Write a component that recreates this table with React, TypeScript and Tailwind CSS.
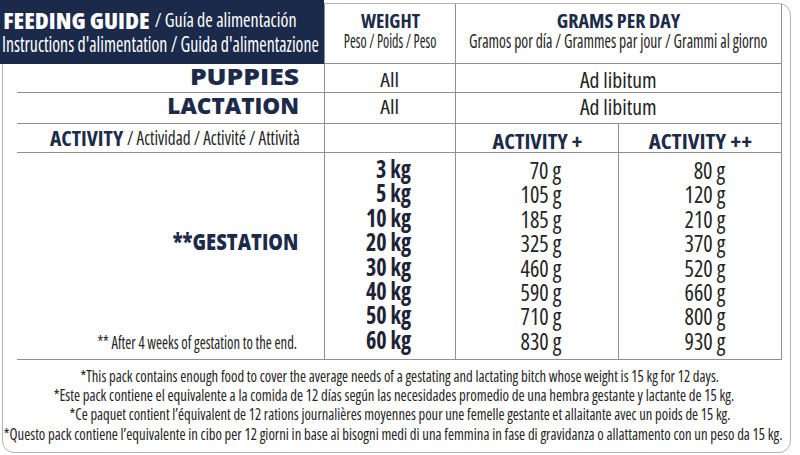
import React from "react";

function F({ box, txt, children }: { box: string; txt: string; children: React.ReactNode }) {
  return (
    <span className={"flex shrink-0 justify-center " + box}>
      <span className={"inline-block whitespace-nowrap " + txt}>{children}</span>
    </span>
  );
}

const kg = ["3 kg", "5 kg", "10 kg", "20 kg", "30 kg", "40 kg", "50 kg", "60 kg"];
const plus = ["70 g", "105 g", "185 g", "325 g", "460 g", "590 g", "710 g", "830 g"];
const plus2 = ["80 g", "120 g", "210 g", "370 g", "520 g", "660 g", "800 g", "930 g"];

export default function App() {
  return (
    <div className="h-[455px] w-[800px] overflow-hidden bg-white font-['Open_Sans'] font-stretch-condensed text-[#242424]">
      <div className="ml-[2px] mt-[3px] flex h-[450px] w-[789px] flex-col rounded-[12px] border border-[#b3b3b3]">
        <div className="grid w-[779px] grid-cols-[321px_131px_163px_163px] grid-rows-[60px_29px_31px_29px_207px] border-r border-[#8f8f8f]">
          {/* header row */}
          <div className="-ml-[3px] -mt-[4px] flex h-[64px] w-[324px] flex-col bg-[#1b2a4a] pl-[3px] pt-[8px] text-white">
            <div className="flex h-[24px] items-center leading-[24px]">
              <F box="w-[147px]" txt="text-[23px] font-extrabold scale-x-[1.04]">FEEDING GUIDE</F>
              <span className="w-[5px]" />
              <F box="w-[142px]" txt="text-[20px] scale-x-[0.9]">/ Guía de alimentación</F>
            </div>
            <div className="flex h-[24px] items-center leading-[24px]">
              <F box="w-[315px]" txt="text-[21px] scale-x-[0.85]">Instructions d'alimentation / Guida d'alimentazione</F>
            </div>
          </div>
          <div className="flex flex-col items-center border-b border-l border-[#8f8f8f] pt-[7px]">
            <div className="flex h-[20px] items-center leading-[20px] text-[#1c2b4a]">
              <F box="w-[60px]" txt="text-[20px] font-bold scale-x-[0.97]">WEIGHT</F>
            </div>
            <div className="flex h-[20px] items-center leading-[20px]">
              <F box="w-[92px]" txt="text-[20px] scale-x-[0.7]">Peso / Poids / Peso</F>
            </div>
          </div>
          <div className="col-span-2 flex flex-col items-center border-b border-l border-[#8f8f8f] pt-[7px]">
            <div className="flex h-[20px] items-center leading-[20px] text-[#1c2b4a]">
              <F box="w-[128px]" txt="text-[20px] font-bold">GRAMS PER DAY</F>
            </div>
            <div className="flex h-[20px] items-center leading-[20px]">
              <F box="w-[300px]" txt="text-[20px] scale-x-[0.78]">Gramos por día / Grammes par jour / Grammi al giorno</F>
            </div>
          </div>

          {/* puppies */}
          <div className="ml-[14px] flex items-center justify-end border-b border-[#8f8f8f] pb-[4px] pr-[26px] leading-[28px] text-[#1c2b4a]">
            <F box="w-[107px]" txt="text-[23px] font-extrabold font-stretch-normal scale-x-[1.15]">PUPPIES</F>
          </div>
          <div className="flex items-center justify-center border-b border-l border-[#8f8f8f] pt-[4px] leading-[24px]">
            <F box="w-[19px]" txt="text-[20px] scale-x-[1.1]">All</F>
          </div>
          <div className="col-span-2 flex items-center justify-center border-b border-l border-[#8f8f8f] pt-[4px] leading-[24px]">
            <F box="w-[77px]" txt="text-[21px] scale-x-[1.03]">Ad libitum</F>
          </div>

          {/* lactation */}
          <div className="ml-[14px] flex items-center justify-end border-b border-[#8f8f8f] pb-[6px] pr-[26px] leading-[28px] text-[#1c2b4a]">
            <F box="w-[129px]" txt="text-[23px] font-extrabold font-stretch-normal scale-x-[0.98]">LACTATION</F>
          </div>
          <div className="flex items-center justify-center border-b border-l border-[#8f8f8f] pb-[2px] leading-[24px]">
            <F box="w-[19px]" txt="text-[20px] scale-x-[1.1]">All</F>
          </div>
          <div className="col-span-2 flex items-center justify-center border-b border-l border-[#8f8f8f] pb-[2px] leading-[24px]">
            <F box="w-[77px]" txt="text-[21px] scale-x-[1.03]">Ad libitum</F>
          </div>

          {/* activity */}
          <div className="ml-[14px] flex items-center justify-end gap-[5px] border-b border-[#8f8f8f] pr-[24px] leading-[24px]">
            <span className="text-[#1c2b4a]">
              <F box="w-[70px]" txt="text-[21px] font-bold scale-x-[1.03]">ACTIVITY</F>
            </span>
            <F box="w-[173px]" txt="text-[20px] scale-x-[0.86]">/ Actividad / Activité / Attività</F>
          </div>
          <div className="border-b border-l border-[#8f8f8f]" />
          <div className="flex items-center justify-center border-b border-l border-[#8f8f8f] pt-[5px] leading-[24px] text-[#1c2b4a]">
            <F box="w-[90px]" txt="text-[21px] font-bold scale-x-[1.06]">ACTIVITY +</F>
          </div>
          <div className="flex items-center justify-center border-b border-l border-[#8f8f8f] pt-[5px] leading-[24px] text-[#1c2b4a]">
            <F box="w-[104px]" txt="text-[21px] font-bold scale-x-[1.09]">ACTIVITY ++</F>
          </div>

          {/* gestation */}
          <div className="ml-[14px] flex flex-col items-end border-b border-[#8f8f8f] pb-[6px] pr-[26px] pt-[74px]">
            <div className="flex h-[28px] items-center leading-[28px] text-[#1c2b4a]">
              <F box="w-[125px]" txt="text-[23px] font-extrabold font-stretch-normal scale-x-[0.8]">**GESTATION</F>
            </div>
            <div className="mt-auto flex h-[22px] items-center leading-[22px]">
              <F box="w-[201px]" txt="text-[18px] scale-x-[0.81]">** After 4 weeks of gestation to the end.</F>
            </div>
          </div>
          <div className="flex flex-col items-end border-b border-l border-[#8f8f8f] pr-[44px] pt-[4px] text-[24px] font-bold leading-[24.4px] text-[#1e2436]">
            {kg.map((k) => (
              <span key={k} className="inline-block origin-right scale-x-[0.92] whitespace-nowrap">{k}</span>
            ))}
          </div>
          <div className="flex flex-col items-end border-b border-l border-[#8f8f8f] pr-[57px] pt-[5px] text-[24px] leading-[24.4px]">
            {plus.map((k) => (
              <span key={k} className="inline-block origin-right scale-x-[0.92] whitespace-nowrap">{k}</span>
            ))}
          </div>
          <div className="flex flex-col items-end border-b border-l border-[#8f8f8f] pr-[56px] pt-[5px] text-[24px] leading-[24.4px]">
            {plus2.map((k) => (
              <span key={k} className="inline-block origin-right scale-x-[0.92] whitespace-nowrap">{k}</span>
            ))}
          </div>
        </div>

        {/* footer */}
        <div className="flex w-[779px] flex-col items-start pt-[6px] text-[17px] leading-[19.2px]">
          <div className="ml-[78px] flex h-[19.2px] items-center">
            <F box="w-[637px]" txt="scale-x-[0.861]">*This pack contains enough food to cover the average needs of a gestating and lactating bitch whose weight is 15 kg for 12 days.</F>
          </div>
          <div className="ml-[51px] flex h-[19.2px] items-center">
            <F box="w-[679px]" txt="scale-x-[0.866]">*Este pack contiene el equivalente a la comida de 12 días según las necesidades promedio de una hembra gestante y lactante de 15 kg.</F>
          </div>
          <div className="ml-[69px] flex h-[19.2px] items-center">
            <F box="w-[656px]" txt="scale-x-[0.856]">*Ce paquet contient l’équivalent de 12 rations journalières moyennes pour une femelle gestante et allaitante avec un poids de 15 kg.</F>
          </div>
          <div className="ml-[0px] flex h-[19.2px] items-center">
            <F box="w-[780px]" txt="scale-x-[0.863]">*Questo pack contiene l’equivalente in cibo per 12 giorni in base ai bisogni medi di una femmina in fase di gravidanza o allattamento con un peso da 15 kg.</F>
          </div>
        </div>
      </div>
    </div>
  );
}
